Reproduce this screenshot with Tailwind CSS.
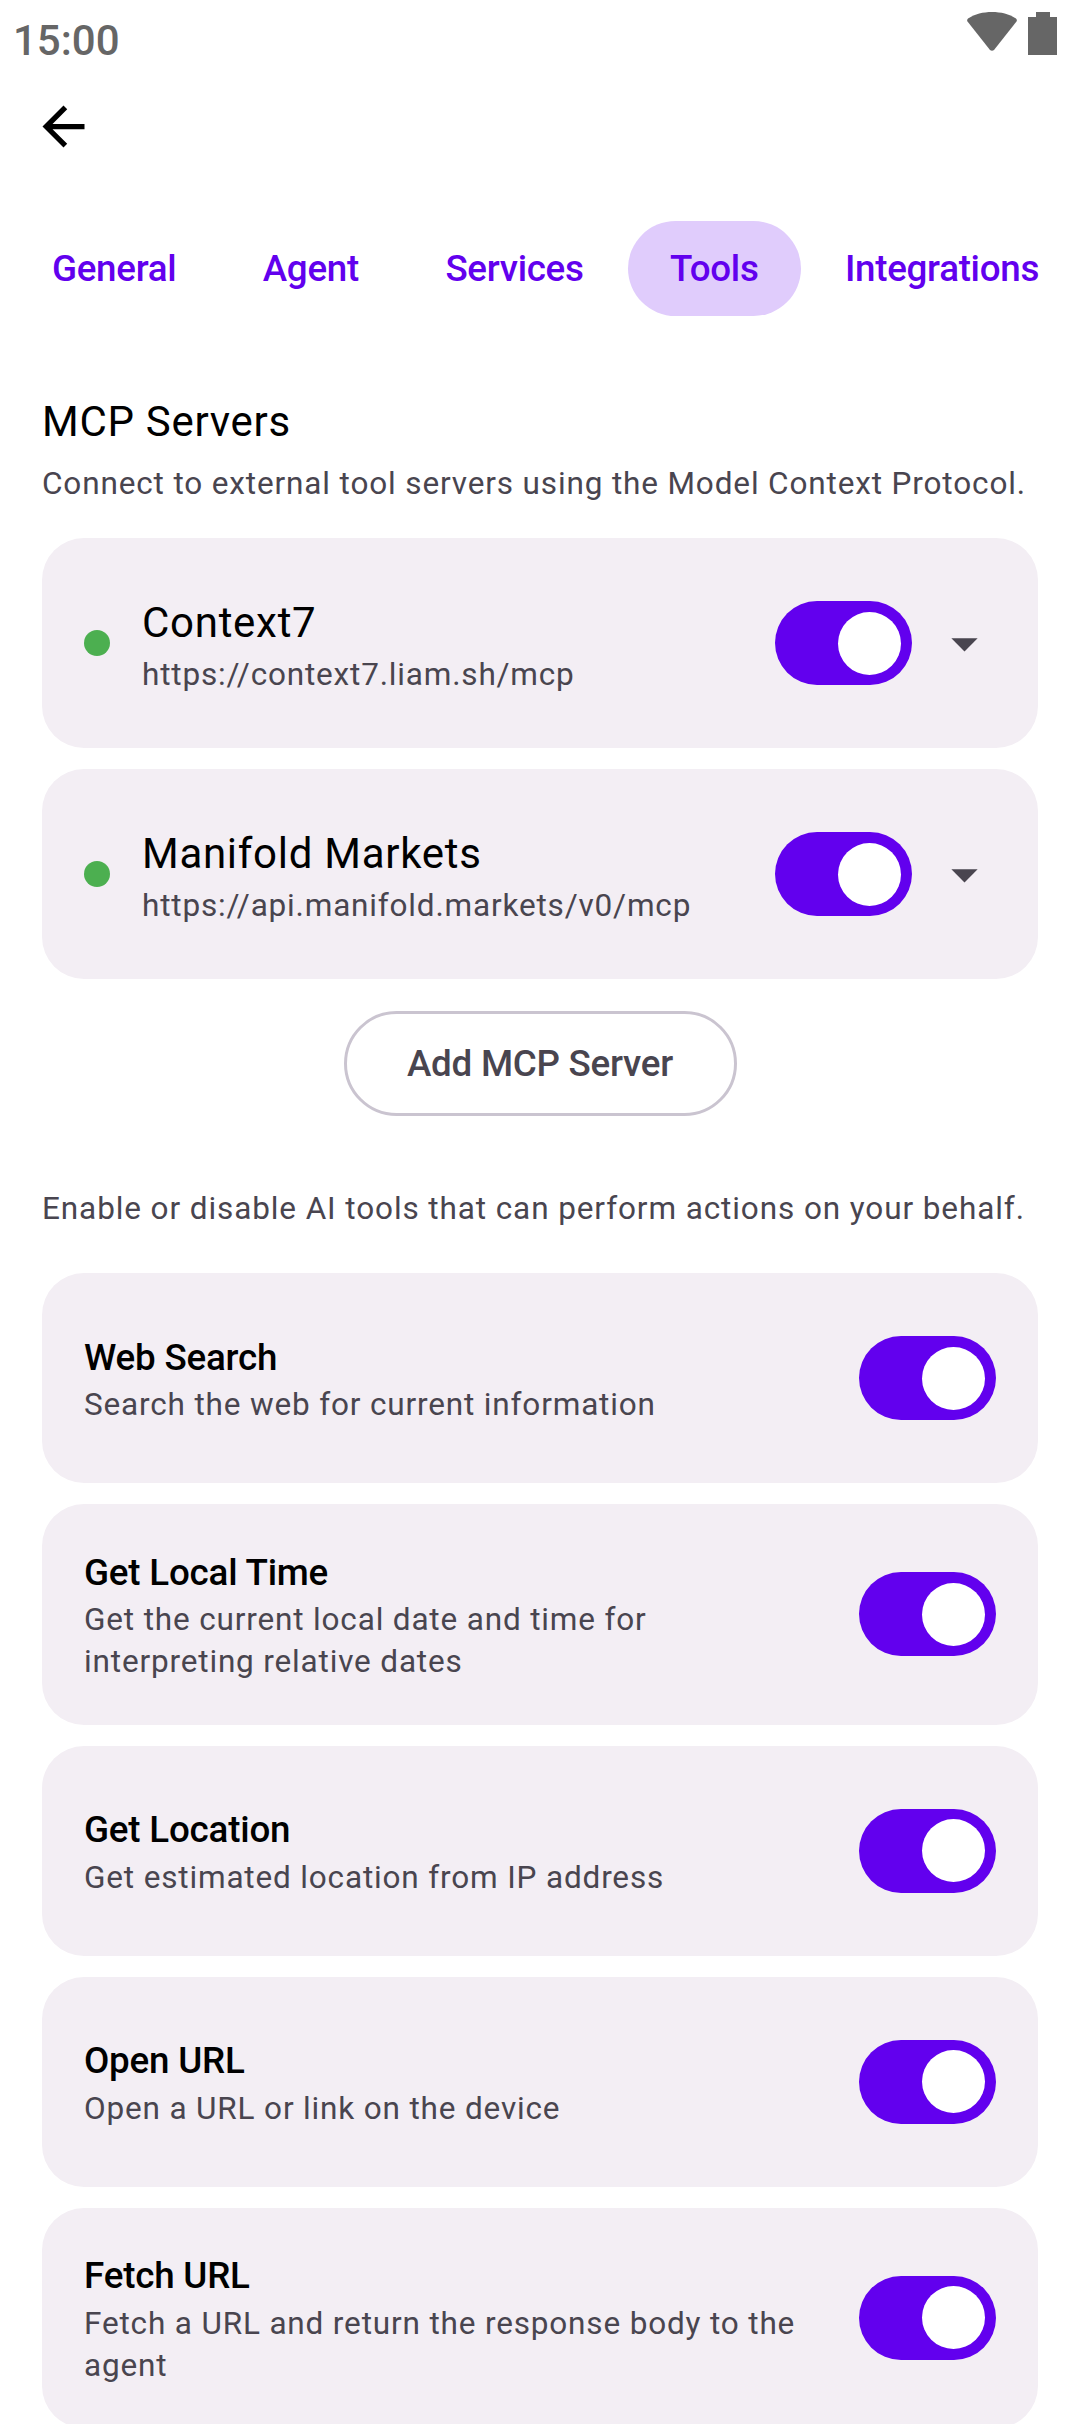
<!doctype html>
<html><head><meta charset="utf-8"><script src="https://cdn.jsdelivr.net/npm/@tailwindcss/browser@4"></script></head>
<body class="bg-white">
<div class="w-[1080px] h-[2424px] overflow-hidden bg-white font-[Roboto,sans-serif] text-black">
  <div class="h-[66px] flex items-start justify-between pl-[13px] pr-[23px]">
    <span class="text-[42px] leading-[50px] mt-[16px] font-medium text-[#666666]">15:00</span>
    <div class="flex items-start gap-[11px] mt-[12px]">
      <svg class="w-[50px] h-[39px]" viewBox="0 0 50 39"><path d="M25 0C34 0 42 2 49 6.500Q50.500 8 49.500 9.500L27 38Q25 39.500 23 38L.5 9.500Q-.5 8 1 6.500C8 2 16 0 25 0Z" fill="#666666"/></svg>
      <svg class="w-[29px] h-[43px]" viewBox="0 0 29 43"><path d="M8 0H22V5H29V43H0V5H8Z" fill="#666666"/></svg>
    </div>
  </div>
  <div class="h-[155px] pl-[32px] pt-[29px]">
    <svg class="w-[63px] h-[63px]" viewBox="0 0 24 24"><path d="M20 11H7.830l5.590-5.590L12 4l-8 8 8 8 1.410-1.410L7.830 13H20v-2z" fill="#000"/></svg>
  </div>
  <div class="flex justify-end gap-[1.500px] mr-[-1.500px] h-[95px] text-[36.750px] font-medium tracking-[-0.3px] text-[#6200EE] whitespace-nowrap">
    <div class="px-[42.500px] flex items-center rounded-full">General</div>
    <div class="px-[42.500px] flex items-center rounded-full">Agent</div>
    <div class="px-[42.500px] flex items-center rounded-full">Services</div>
    <div class="px-[42.500px] flex items-center rounded-full bg-[#E0CCFC]">Tools</div>
    <div class="px-[42.500px] flex items-center rounded-full">Integrations</div>
  </div>
  <div class="px-[42px]">
    <h2 class="mt-[74px] text-[42px] leading-[63px] font-[450] tracking-[0.72px]">MCP Servers</h2>
    <p class="mt-[10px] text-[31.500px] leading-[42px] tracking-[0.86px] text-[#49454F] whitespace-nowrap">Connect to external tool servers using the Model Context Protocol.</p>
    <div class="mt-[33px] flex flex-col gap-[21px]">
      <div class="h-[210px] rounded-[42px] bg-[#F3EEF4] pl-[42px] pr-[42px] flex items-center">
        <span class="w-[26px] h-[26px] rounded-full bg-[#4CAF50] mr-[32px] shrink-0"></span>
        <div class="flex-1 min-w-0">
          <div class="text-[42px] leading-[63px] font-[450] tracking-[0.72px]">Context7</div>
          <div class="text-[31.500px] leading-[42px] tracking-[0.82px] text-[#49454F]">https://context7.liam.sh/mcp</div>
        </div>
        <div class="w-[137px] h-[84px] rounded-full bg-[#6200EE] flex items-center justify-end pr-[11.500px] shrink-0"><span class="w-[63px] h-[63px] rounded-full bg-white"></span></div>
        <svg class="w-[63px] h-[63px] ml-[21px] shrink-0" viewBox="0 0 24 24"><path d="M7 10l5 5 5-5z" fill="#49454F"/></svg>
      </div>
      <div class="h-[210px] rounded-[42px] bg-[#F3EEF4] pl-[42px] pr-[42px] flex items-center">
        <span class="w-[26px] h-[26px] rounded-full bg-[#4CAF50] mr-[32px] shrink-0"></span>
        <div class="flex-1 min-w-0">
          <div class="text-[42px] leading-[63px] font-[450] tracking-[0.72px]">Manifold Markets</div>
          <div class="text-[31.500px] leading-[42px] tracking-[0.82px] text-[#49454F]">https://api.manifold.markets/v0/mcp</div>
        </div>
        <div class="w-[137px] h-[84px] rounded-full bg-[#6200EE] flex items-center justify-end pr-[11.500px] shrink-0"><span class="w-[63px] h-[63px] rounded-full bg-white"></span></div>
        <svg class="w-[63px] h-[63px] ml-[21px] shrink-0" viewBox="0 0 24 24"><path d="M7 10l5 5 5-5z" fill="#49454F"/></svg>
      </div>
    </div>
    <div class="mt-[32px] flex justify-center">
      <div class="h-[105px] w-[393px] justify-center flex items-center rounded-full border-[3px] border-[#CAC4D0] text-[36.750px] font-medium tracking-[-0.25px] text-[#49454F]">Add MCP Server</div>
    </div>
    <p class="mt-[72px] text-[31.500px] leading-[42px] tracking-[0.9px] text-[#49454F] whitespace-nowrap">Enable or disable AI tools that can perform actions on your behalf.</p>
    <div class="mt-[43px] flex flex-col gap-[21px]">
      <div class="min-h-[210px] rounded-[42px] bg-[#F3EEF4] py-[41.250px] px-[42px] flex items-center">
        <div class="flex-1 min-w-0 pr-[42px] pt-[1.500px]">
          <div class="text-[36.750px] leading-[52.500px] font-medium tracking-[-0.2px]">Web Search</div>
          <div class="text-[31.500px] leading-[42px] tracking-[0.84px] text-[#49454F]">Search the web for current information</div>
        </div>
        <div class="w-[137px] h-[84px] rounded-full bg-[#6200EE] flex items-center justify-end pr-[11.500px] shrink-0"><span class="w-[63px] h-[63px] rounded-full bg-white"></span></div>
      </div>
      <div class="min-h-[210px] rounded-[42px] bg-[#F3EEF4] py-[41.250px] px-[42px] flex items-center">
        <div class="flex-1 min-w-0 pr-[42px] pt-[1.500px]">
          <div class="text-[36.750px] leading-[52.500px] font-medium tracking-[-0.2px]">Get Local Time</div>
          <div class="text-[31.500px] leading-[42px] tracking-[0.84px] text-[#49454F]">Get the current local date and time for interpreting relative dates</div>
        </div>
        <div class="w-[137px] h-[84px] rounded-full bg-[#6200EE] flex items-center justify-end pr-[11.500px] shrink-0"><span class="w-[63px] h-[63px] rounded-full bg-white"></span></div>
      </div>
      <div class="min-h-[210px] rounded-[42px] bg-[#F3EEF4] py-[41.250px] px-[42px] flex items-center">
        <div class="flex-1 min-w-0 pr-[42px] pt-[1.500px]">
          <div class="text-[36.750px] leading-[52.500px] font-medium tracking-[-0.2px]">Get Location</div>
          <div class="text-[31.500px] leading-[42px] tracking-[0.84px] text-[#49454F]">Get estimated location from IP address</div>
        </div>
        <div class="w-[137px] h-[84px] rounded-full bg-[#6200EE] flex items-center justify-end pr-[11.500px] shrink-0"><span class="w-[63px] h-[63px] rounded-full bg-white"></span></div>
      </div>
      <div class="min-h-[210px] rounded-[42px] bg-[#F3EEF4] py-[41.250px] px-[42px] flex items-center">
        <div class="flex-1 min-w-0 pr-[42px] pt-[1.500px]">
          <div class="text-[36.750px] leading-[52.500px] font-medium tracking-[-0.2px]">Open URL</div>
          <div class="text-[31.500px] leading-[42px] tracking-[0.84px] text-[#49454F]">Open a URL or link on the device</div>
        </div>
        <div class="w-[137px] h-[84px] rounded-full bg-[#6200EE] flex items-center justify-end pr-[11.500px] shrink-0"><span class="w-[63px] h-[63px] rounded-full bg-white"></span></div>
      </div>
      <div class="min-h-[210px] rounded-[42px] bg-[#F3EEF4] py-[41.250px] px-[42px] flex items-center">
        <div class="flex-1 min-w-0 pr-[42px] pt-[1.500px]">
          <div class="text-[36.750px] leading-[52.500px] font-medium tracking-[-0.2px]">Fetch URL</div>
          <div class="text-[31.500px] leading-[42px] tracking-[0.84px] text-[#49454F]">Fetch a URL and return the response body to the agent</div>
        </div>
        <div class="w-[137px] h-[84px] rounded-full bg-[#6200EE] flex items-center justify-end pr-[11.500px] shrink-0"><span class="w-[63px] h-[63px] rounded-full bg-white"></span></div>
      </div>
    </div>
  </div>
</div>
</body></html>
